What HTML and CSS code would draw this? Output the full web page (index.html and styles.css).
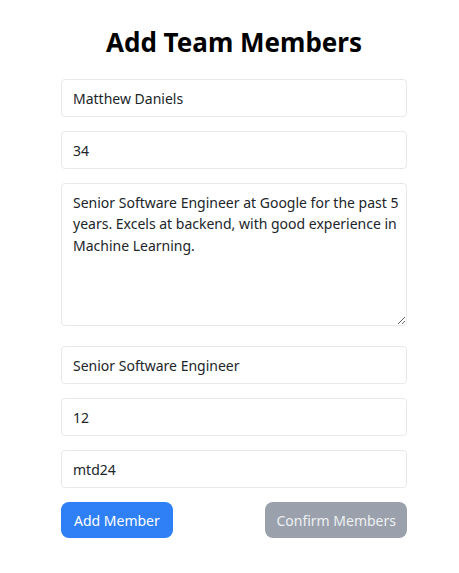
FILE: index.html
```html
<!DOCTYPE html>
<html lang="en">
<head>
    <meta charset="UTF-8">
    <meta name="viewport" content="width=device-width, initial-scale=1.0">
    <title>Add Team Members</title>
    <link rel="stylesheet" href="styles.css">
</head>
<body>

    <div class="container">
        <h1>Add Team Members</h1>

        <!-- Member form -->
        <form class="member-form">
            <input type="text" class="field" value="Matthew Daniels" placeholder="Name">
            <input type="text" class="field" value="34" placeholder="Age">
            <textarea class="field field-area" placeholder="Description">Senior Software Engineer at Google for the past 5 years. Excels at backend, with good experience in Machine Learning.</textarea>
            <input type="text" class="field" value="Senior Software Engineer" placeholder="Role">
            <input type="text" class="field" value="12" placeholder="Experience">
            <input type="text" class="field" value="mtd24" placeholder="Username">

            <div class="actions">
                <button type="button" class="btn btn-add">Add Member</button>
                <button type="button" class="btn btn-confirm">Confirm Members</button>
            </div>
        </form>
    </div>

</body>
</html>
```

FILE: styles.css
```css
body {
    margin: 0;
    font-family: "Noto Sans", "Open Sans", sans-serif;
    color: #212529;
    background: #fff;
}
.container {
    width: 346px;
    margin-left: 61px;
    padding-top: 24px;
}
h1 {
    margin: 0 0 19px;
    text-align: center;
    font-size: 26px;
    font-weight: 700;
    line-height: 36px;
    color: #000;
}
.member-form {
    display: flex;
    flex-direction: column;
    gap: 14px;
}
.field {
    box-sizing: border-box;
    width: 100%;
    height: 38px;
    margin: 0;
    padding: 6px 11px;
    font-family: inherit;
    font-size: 14px;
    line-height: 24px;
    color: #212529;
    border: 1px solid #e6e8eb;
    border-radius: 4px;
    background: #fff;
}
.field-area {
    height: 143px;
    margin-bottom: 6px;
    padding: 8px 6px 6px 11px;
    line-height: 21.3px;
    resize: vertical;
}
.actions {
    display: flex;
    justify-content: space-between;
}
.btn {
    height: 36px;
    padding: 0 13px;
    border: none;
    border-radius: 8px;
    font-family: inherit;
    font-size: 14px;
    color: #fff;
    cursor: pointer;
}
.btn-add {
    background: #2f80f6;
}
.btn-confirm {
    padding: 0 11px;
    background: #9aa1ad;
    color: #eef0f3;
}
```
